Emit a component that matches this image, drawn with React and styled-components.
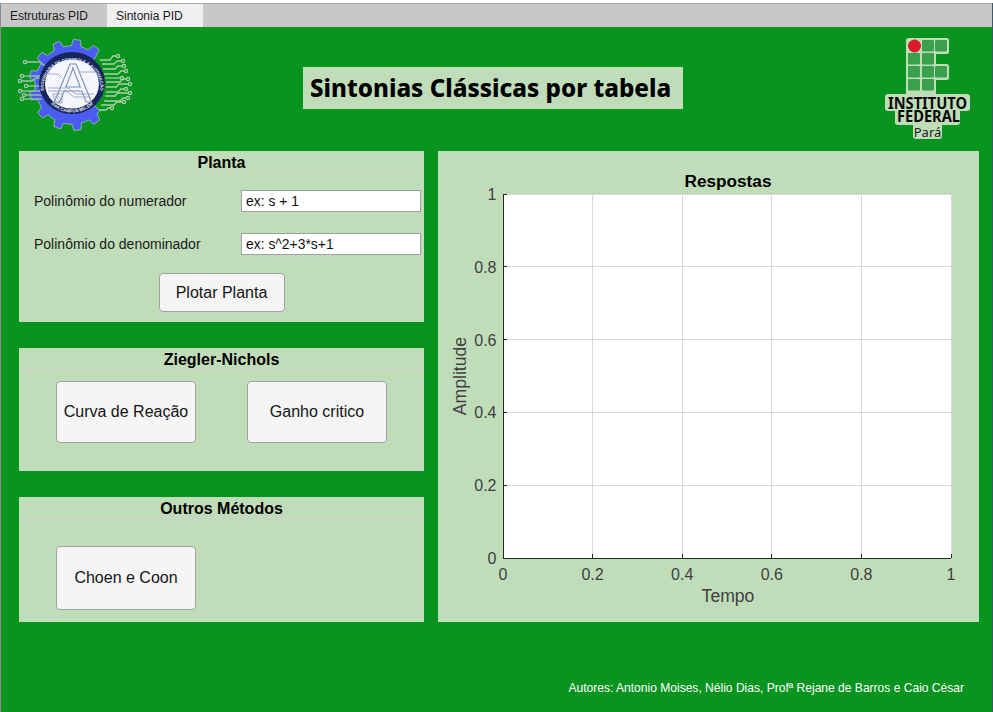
import styled, { createGlobalStyle } from "styled-components";

const Global = createGlobalStyle`
html, body { margin: 0; padding: 0; background: #fff; }
body { font-family: "Liberation Sans", Arial, sans-serif; }
`;

const Window = styled.div`
width: 991px;
height: 709px;
margin-top: 3px;
border-left: 1px solid #8c8c8c;
border-right: 1px solid #3c5a6a;
display: flex;
flex-direction: column;
background: #09941f;
overflow: hidden;
`;

const TabBar = styled.div`
height: 24px;
flex: none;
display: flex;
background: #c8c8c8;
box-sizing: border-box;
border-top: 1px solid #a8a8a8;
`;

const Tab = styled.div`
width: ${({ w }) => w}px;
display: flex;
align-items: center;
padding-left: ${({ pad }) => pad}px;
box-sizing: border-box;
font-size: 12px;
color: #1a1a1a;
background: ${({ active }) => (active ? "#f0f0f0" : "transparent")};
`;

const Header = styled.header`
height: 124px;
flex: none;
display: flex;
align-items: flex-start;
padding: 5px 0 0 9px;
box-sizing: border-box;
`;

const LogoLeft = styled.svg`
width: 125px;
height: 104px;
flex: none;
`;

const LogoRight = styled.svg`
width: 95px;
height: 106px;
flex: none;
margin: 2px 0 0 197px;
`;

const Title = styled.h1`
margin: 35px 0 0 168px;
width: 380px;
height: 42px;
flex: none;
box-sizing: border-box;
background: #c0ddb9;
padding-left: 7px;
font: 800 24.15px/42px "Noto Sans", "DejaVu Sans", sans-serif;
color: #000;
white-space: nowrap;
`;

const Main = styled.main`
display: flex;
gap: 14px;
padding-left: 18px;
`;

const Column = styled.div`
width: 405px;
display: flex;
flex-direction: column;
gap: 26px;
`;

const Panel = styled.section`
height: ${({ h }) => h}px;
box-sizing: border-box;
background: #c0ddb9;
`;

const PanelTitle = styled.h2`
margin: 0;
height: 23px;
box-sizing: border-box;
border-bottom: 2px solid #c9d6c5;
font: 700 16px/23px "Liberation Sans", Arial, sans-serif;
color: #000;
text-align: center;
`;

const Fields = styled.div`
padding: 16px 3px 0 15px;
display: grid;
grid-template-columns: 207px 180px;
row-gap: 21px;
align-items: center;
`;

const Label = styled.label`
font-size: 14px;
color: #1a1a1a;
`;

const TextInput = styled.input`
height: 22px;
width: 180px;
box-sizing: border-box;
margin: 0;
padding: 0 4px;
background: #fff;
border: 1px solid #a0a0a0;
border-radius: 0;
outline: none;
font: 13.9px "Liberation Sans", Arial, sans-serif;
color: #111;
`;

const Actions = styled.div`
display: flex;
justify-content: ${({ center }) => (center ? "center" : "flex-start")};
gap: 51px;
padding: ${({ top }) => top}px 0 0 ${({ left = 0 }) => left}px;
`;

const Button = styled.button`
width: ${({ w }) => w}px;
height: ${({ h }) => h}px;
margin: 0;
padding: 0;
box-sizing: border-box;
background: #f5f5f5;
border: 1px solid #a3a3a3;
border-radius: 4px;
font: 16px "Liberation Sans", Arial, sans-serif;
color: #141414;
`;

const ChartPanel = styled.section`
width: 541px;
height: 471px;
flex: none;
background: #c0ddb9;
`;

const Chart = styled.svg`
display: block;
width: 541px;
height: 471px;
font-family: "Liberation Sans", Arial, sans-serif;
`;

const Footer = styled.footer`
margin-top: 59px;
padding-right: 28px;
text-align: right;
font-size: 12.05px;
line-height: 14px;
color: #fff;
`;

const teeth = 13;
const gearPath = () => {
  const pts = [];
  const step = 360 / teeth;
  for (let a = 145; a <= 400; a += step) {
    const p = (r, d) => {
      const t = ((a + d - 90) * Math.PI) / 180;
      return `${(62 + r * Math.cos(t)).toFixed(1)},${(53 + r * 1.06 * Math.sin(t)).toFixed(1)}`;
    };
    pts.push(p(37, -step * 0.5), p(37, -step * 0.27), p(43, -step * 0.17), p(43, step * 0.17), p(37, step * 0.27));
  }
  return `M62,53 L${pts.join(" L")} Z`;
};

// each trace: start point, bend, end point; a small pad sits on the free end
const rightTraces = [
  [[90, 28], [100, 28], [103, 24], [108, 24]],
  [[92, 32], [104, 32], [107, 29], [113, 29]],
  [[93, 37], [105, 37], [108, 34], [114, 34]],
  [[94, 42], [108, 42], [111, 39], [116, 39]],
  [[95, 46], [108, 46], [108, 46], [112, 46]],
  [[96, 50], [110, 50], [113, 47], [118, 47]],
  [[96, 55], [106, 55], [109, 52], [120, 52]],
  [[96, 60], [108, 60], [111, 57], [116, 57]],
  [[95, 64], [105, 64], [108, 61], [120, 61]],
  [[94, 69], [110, 69], [113, 66], [118, 66]],
  [[91, 73], [104, 73], [107, 70], [114, 70]],
  [[88, 78], [96, 78], [98, 76], [102, 76]],
];
const leftTraces = [
  [[15, 30], [30, 30], [36, 35], [38, 35]],
  [[12, 44], [28, 44], [28, 44], [30, 44]],
  [[10, 49], [22, 49], [26, 46], [30, 46]],
  [[16, 54], [30, 54], [30, 54], [32, 54]],
  [[10, 59], [24, 59], [24, 59], [30, 59]],
  [[14, 63], [28, 63], [28, 63], [32, 63]],
  [[12, 67], [26, 67], [26, 67], [32, 67]],
];

const Circuit = ({ traces, padAt, color }) => (
  <g fill="none" stroke={color} strokeWidth="1.3">
    {traces.map((pts) => {
      const pad = pts[padAt === "start" ? 0 : pts.length - 1];
      return (
        <g key={pts.join()}>
          <polyline points={pts.map((p) => p.join(",")).join(" ")} />
          <circle cx={pad[0]} cy={pad[1]} r="1.6" fill="#09941f" />
        </g>
      );
    })}
  </g>
);

const EngLogo = () => (
  <LogoLeft viewBox="0 0 125 104">
    <Circuit traces={rightTraces} padAt="end" color="#a9d0a6" />
    <path d={gearPath()} fill="#4a5df0" stroke="#9fc8a8" strokeWidth="0.8" />
    <Circuit traces={leftTraces} padAt="start" color="#a3c4ab" />
    <ellipse cx="62" cy="51" rx="33" ry="31" fill="#17265f" />
    <ellipse cx="62" cy="52" rx="27" ry="24.5" fill="#f4f6fb" />
    <g stroke="#8d9dc0" strokeWidth="0.8" fill="none">
      <path d="M38,42 H48 L52,46" />
      <path d="M38,56 H58 L66,62 H84" />
      <path d="M38,59 H56 L64,65 H80" />
      <path d="M70,40 H85" />
      <path d="M43,62 H52 V71 H45 Z" />
      <path d="M45,64 L50,69 M47,63 L51,67" />
    </g>
    <text x="63" y="70" textAnchor="middle" fontFamily="Liberation Sans, sans-serif" fontSize="56" fill="none" stroke="#7f90b8" strokeWidth="1.1">A</text>
    <defs>
      <path id="ringTop" d="M37,68 A28.5,26.5 0 1 1 87,68" />
      <path id="ringBottom" d="M36,66 A30,29 0 0 0 88,66" />
    </defs>
    <text fontFamily="Liberation Sans, sans-serif" fontSize="4.2" fontWeight="700" fill="#e6e9f5">
      <textPath href="#ringTop" startOffset="50%" textAnchor="middle">ENGENHARIA DE CONTROLE E AUTOMAÇÃO</textPath>
    </text>
    <text fontFamily="Liberation Sans, sans-serif" fontSize="4.4" fontWeight="700" fill="#e6e9f5">
      <textPath href="#ringBottom" startOffset="50%" textAnchor="middle">IFPA CAMPUS BELÉM</textPath>
    </text>
  </LogoLeft>
);

const cells = [
  [42, 6], [55, 6],
  [28, 19], [42, 19],
  [28, 32], [42, 32], [55, 32],
  [28, 45], [42, 45],
];

const IfLogo = () => (
  <LogoRight viewBox="0 0 95 106">
    <g fill="#c0ddb9">
      <rect x="26" y="4" width="43" height="16" rx="2.5" />
      <rect x="26" y="18" width="30" height="16" />
      <rect x="26" y="30" width="43" height="16" rx="2.5" />
      <rect x="26" y="44" width="30" height="18" />
      <rect x="5" y="60" width="85" height="17" rx="3" />
      <rect x="15" y="74" width="65" height="17" rx="3" />
      <rect x="33" y="89" width="29" height="16" rx="3" />
    </g>
    <g fill="#3ba04e">
      {cells.map(([x, y]) => (
        <rect key={`${x}-${y}`} x={x} y={y} width="12" height="11.5" rx="1" />
      ))}
    </g>
    <circle cx="34.5" cy="12" r="6.5" fill="#dc1c2a" />
    <g fontFamily="Noto Sans, sans-serif" textAnchor="middle" fill="#0a0a0a" fontWeight="700">
      <text x="47.5" y="75" fontSize="16.5" textLength="79" lengthAdjust="spacingAndGlyphs">INSTITUTO</text>
      <text x="48.5" y="87.5" fontSize="15.5" textLength="63" lengthAdjust="spacingAndGlyphs">FEDERAL</text>
      <text x="47.5" y="102.5" fontSize="13" fontWeight="400" fill="#222">Pará</text>
    </g>
  </LogoRight>
);

const ticks = [0, 0.2, 0.4, 0.6, 0.8, 1];
const X0 = 65;
const X1 = 513;
const Y0 = 407;
const Y1 = 43;
const px = (v) => X0 + (X1 - X0) * v;
const py = (v) => Y0 - (Y0 - Y1) * v;

const ResponseChart = () => (
  <Chart viewBox="0 0 541 471">
    <rect x={X0} y={Y1} width={X1 - X0} height={Y0 - Y1} fill="#fff" />
    <g stroke="#d9d9d9" strokeWidth="1" shapeRendering="crispEdges">
      {ticks.slice(1).map((t) => (
        <line key={`v${t}`} x1={px(t)} x2={px(t)} y1={Y1} y2={Y0} />
      ))}
      {ticks.slice(1).map((t) => (
        <line key={`h${t}`} x1={X0} x2={X1} y1={py(t)} y2={py(t)} />
      ))}
    </g>
    <g stroke="#262626" strokeWidth="1" shapeRendering="crispEdges">
      <line x1={X0} x2={X0} y1={Y1} y2={Y0 + 0.5} />
      <line x1={X0} x2={X1} y1={Y0 + 0.5} y2={Y0 + 0.5} />
      {ticks.map((t) => (
        <line key={`tx${t}`} x1={px(t)} x2={px(t)} y1={Y0} y2={Y0 - 4} />
      ))}
      {ticks.map((t) => (
        <line key={`ty${t}`} x1={X0} x2={X0 + 4} y1={py(t)} y2={py(t)} />
      ))}
    </g>
    <g fontSize="16" fill="#404040">
      {ticks.map((t) => (
        <text key={`lx${t}`} x={px(t)} y={429} textAnchor="middle">{t}</text>
      ))}
      {ticks.map((t) => (
        <text key={`ly${t}`} x={58.5} y={py(t) + 6} textAnchor="end">{t}</text>
      ))}
    </g>
    <text x="290" y="35.5" textAnchor="middle" fontSize="17.2" fontWeight="700" fill="#000">Respostas</text>
    <text x="290" y="451" textAnchor="middle" fontSize="17.6" fill="#404040">Tempo</text>
    <text transform="translate(28 225) rotate(-90)" textAnchor="middle" fontSize="17.6" fill="#404040">Amplitude</text>
  </Chart>
);

export default function App() {
  return (
    <Window>
      <Global />
      <TabBar>
        <Tab w={106} pad={9}>Estruturas PID</Tab>
        <Tab w={96} pad={9} active>Sintonia PID</Tab>
      </TabBar>
      <Header>
        <EngLogo />
        <Title>Sintonias Clássicas por tabela</Title>
        <IfLogo />
      </Header>
      <Main>
        <Column>
          <Panel h={171}>
            <PanelTitle>Planta</PanelTitle>
            <Fields>
              <Label>Polinômio do numerador</Label>
              <TextInput readOnly value="ex: s + 1" />
              <Label>Polinômio do denominador</Label>
              <TextInput readOnly value="ex: s^2+3*s+1" />
            </Fields>
            <Actions center top={18}>
              <Button w={126} h={39}>Plotar Planta</Button>
            </Actions>
          </Panel>
          <Panel h={123}>
            <PanelTitle>Ziegler-Nichols</PanelTitle>
            <Actions top={10} left={37}>
              <Button w={140} h={62}>Curva de Reação</Button>
              <Button w={140} h={62}>Ganho critico</Button>
            </Actions>
          </Panel>
          <Panel h={125}>
            <PanelTitle>Outros Métodos</PanelTitle>
            <Actions top={26} left={37}>
              <Button w={140} h={64}>Choen e Coon</Button>
            </Actions>
          </Panel>
        </Column>
        <ChartPanel>
          <ResponseChart />
        </ChartPanel>
      </Main>
      <Footer>Autores: Antonio Moises, Nélio Dias, Profª Rejane de Barros e Caio César</Footer>
    </Window>
  );
}
